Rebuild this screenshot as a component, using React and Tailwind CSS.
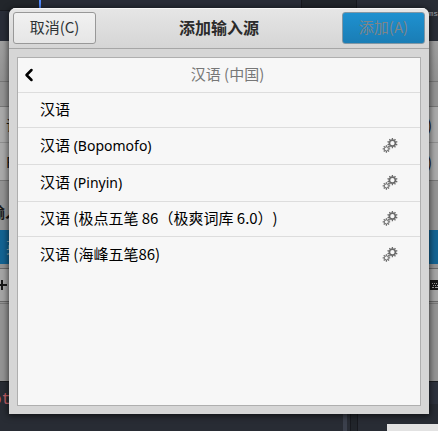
import { ChevronLeft } from "lucide-react";

const sources = [
  { name: "汉语", height: "h-[35px]", configurable: false },
  { name: "汉语", variant: "(Bopomofo)", height: "h-[37px]", configurable: true },
  { name: "汉语", variant: "(Pinyin)", height: "h-[37px]", configurable: true },
  { name: "汉语 (极点五笔 86（极爽词库 6.0）)", height: "h-[35px]", configurable: true },
  { name: "汉语 (海峰五笔86)", height: "h-[35px]", configurable: true, last: true },
];

function Gear({ cx, cy, r, teeth, stroke }) {
  return (
    <g transform={`translate(${cx} ${cy})`} fill="none" stroke="#6a6a6a">
      <circle r={r} strokeWidth={stroke} />
      {Array.from({ length: teeth }, (_, i) => (
        <path
          key={i}
          d={`M0 ${-r - stroke / 2 + 0.3}V${-r - stroke / 2 - 1.3}`}
          strokeWidth="1.3"
          transform={`rotate(${(360 / teeth) * i})`}
        />
      ))}
    </g>
  );
}

function GearsIcon() {
  return (
    <svg width="16" height="16" viewBox="0 0 16 16" aria-hidden="true">
      <Gear cx={10.4} cy={6.2} r={3} teeth={10} stroke={1.7} />
      <Gear cx={4.4} cy={11.9} r={2} teeth={8} stroke={0.9} />
    </svg>
  );
}

function KeyboardIcon() {
  return (
    <svg width="16" height="10" viewBox="0 0 16 10" className="shrink-0" aria-hidden="true">
      <path fill="#171717" d="M0 0h16v10H0z" />
      <path stroke="#a0a0a0" strokeDasharray="1 1" d="M2 3.5h12M3 5.5h11" />
      <path stroke="#a0a0a0" d="M2 7.5h2M5 7.5h6M12 7.5h2" />
    </svg>
  );
}

function Desktop() {
  return (
    <div
      aria-hidden="true"
      className="col-start-1 row-start-1 flex flex-col overflow-hidden whitespace-nowrap bg-[#282c34] text-[#171717]"
    >
      <div className="flex h-[41px] shrink-0">
        <div className="w-[39px] bg-[#292d38]">
          <div className="h-[11px] border-b border-[#181a20] bg-[#22262b]" />
        </div>
        <div className="h-2 w-[2px] bg-[#528bff]" />
        <div className="flex-1 bg-[#292d38]" />
        <div className="w-[56px] border-x border-[#17191e] bg-[#21252b]" />
        <div className="flex w-[81px] justify-end bg-[#292d36] pt-1 font-['Liberation_Mono'] text-[8px] text-[#a5a8b0]">
          ms
        </div>
      </div>

      <div className="flex h-[341px] shrink-0 flex-col border-b border-[#1a1c20] bg-[#949494]">
        <div className="h-[41px] border-b border-[#777777] bg-linear-to-b from-[#a0a0a0] to-[#929292]" />
        <div className="h-[24px]" />
        <div className="border-y border-[#777777] bg-[#aaaaaa]">
          <div className="flex h-[36px] items-center justify-between border-b border-[#8f8f8f] px-[6px]">
            <span>语</span>
            <span>)</span>
          </div>
          <div className="flex h-[37px] items-center justify-between px-[6px]">
            <span>F</span>
            <span>)</span>
          </div>
        </div>
        <div className="-ml-[10px] flex h-[49px] items-end pb-2 font-bold">输入</div>
        <div className="flex h-[34px] items-center bg-[#136392] px-[6px] text-[#98a8b0]">英</div>
        <div className="mt-1 flex h-[34px] items-center justify-between border-y border-[#686868] bg-[#a5a5a5]">
          <svg width="8" height="12" viewBox="0 0 8 12">
            <path d="M0 6h7M2 1v10" stroke="#171717" strokeWidth="2" />
          </svg>
          <div className="flex w-[8px] overflow-hidden">
            <KeyboardIcon />
          </div>
        </div>
        <div className="mt-px h-px bg-[#777777]" />
      </div>

      <div className="flex flex-1">
        <div className="flex-1 overflow-hidden bg-[#282c34] pt-2 font-['Liberation_Mono'] text-[16px] text-[#c25f67]">
          <div className="-ml-2">ot</div>
        </div>
        <div className="w-[4px] bg-[#3b404c]" />
        <div className="w-[3px]" />
        <div className="w-[8px] border-x border-[#17191e] bg-[#21252b]" />
        <div className="flex w-[80px] flex-col items-end">
          <div className="h-[22px] w-full bg-[#2d323d]" />
          <div className="flex-1" />
          <div className="h-[7px] w-[51px] bg-[#e2e2e2]" />
        </div>
      </div>
    </div>
  );
}

function SourceRow({ name, variant, height, configurable, last }) {
  return (
    <li
      className={`flex ${height} items-center justify-between px-[22px] pb-[2px] ${
        last ? "" : "border-b border-[#dddddd]"
      }`}
    >
      <span className="[text-spacing-trim:space-all]">
        {name}
        {variant && <span className="font-['Noto_Sans',sans-serif] text-sm"> {variant}</span>}
      </span>
      {configurable && (
        <button type="button" aria-label={`${name} ${variant ?? ""} 设置`}>
          <GearsIcon />
        </button>
      )}
    </li>
  );
}

export default function App() {
  return (
    <div className="grid h-screen grid-cols-1 grid-rows-1 overflow-hidden font-['Noto_Sans_CJK_SC',sans-serif] text-[15px] leading-5">
      <Desktop />
      <section
        role="dialog"
        aria-labelledby="dialog-title"
        className="z-10 col-start-1 row-start-1 mx-[9px] mt-2 mb-[17px] flex flex-col overflow-hidden rounded-t-[7px] bg-[#d6d6d6] shadow-[0_1px_6px_1px_rgba(0,0,0,0.6)]"
      >
        <header className="flex h-[41px] shrink-0 items-center justify-between border-b border-[#a6a6a6] bg-linear-to-b from-[#e6e6e6] to-[#d5d5d5] px-1 shadow-[inset_0_1px_0_#f6f6f6]">
          <button
            type="button"
            className="h-8 w-[83px] rounded-[3px] border border-[#989898] bg-linear-to-b from-[#f1f1f1] to-[#e6e6e6] pb-[2px] text-[#2e3436]"
          >
            取消(C)
          </button>
          <h1 id="dialog-title" className="pb-[2px] text-base font-bold leading-5 text-[#2b2b2b]">
            添加输入源
          </h1>
          <button
            type="button"
            disabled
            className="h-8 w-[83px] rounded-[3px] border border-[#8097a5] bg-linear-to-b from-[#1e91d0] to-[#1a7db5] pb-[2px] text-[#7f8588]"
          >
            添加(A)
          </button>
        </header>
        <div className="m-2 flex min-h-0 flex-1 flex-col border border-[#afafaf] bg-[#f7f7f7] text-black">
          <div className="flex h-[35px] items-center border-b border-[#dddddd]">
            <button type="button" aria-label="返回" className="flex w-[17px] shrink-0 justify-end">
              <ChevronLeft className="-mr-1 h-[20px] w-[20px] shrink-0" strokeWidth={3} />
            </button>
            <h2 className="flex-1 pb-[2px] text-center text-[#777777]">汉语 (中国)</h2>
          </div>
          <ul>
            {sources.map((source) => (
              <SourceRow key={source.name + (source.variant ?? "")} {...source} />
            ))}
          </ul>
        </div>
      </section>
    </div>
  );
}
